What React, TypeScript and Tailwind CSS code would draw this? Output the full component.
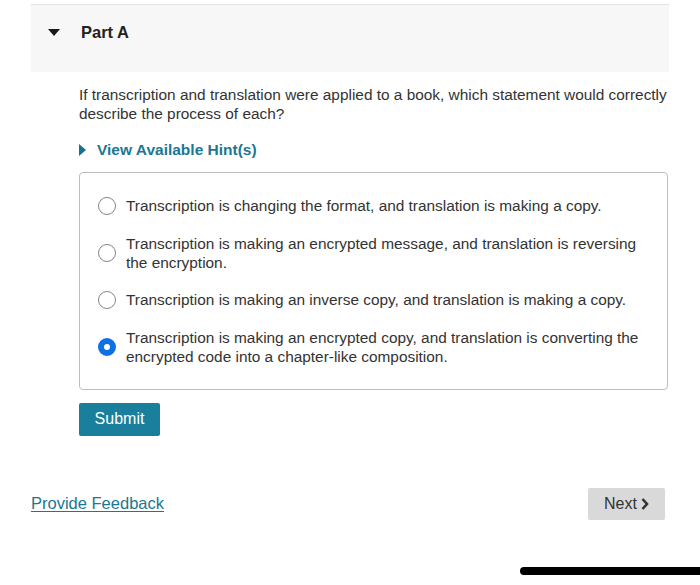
const options = [
  { text: "Transcription is changing the format, and translation is making a copy.", checked: false },
  {
    text: "Transcription is making an encrypted message, and translation is reversing the encryption.",
    checked: false,
  },
  { text: "Transcription is making an inverse copy, and translation is making a copy.", checked: false },
  {
    text: "Transcription is making an encrypted copy, and translation is converting the encrypted code into a chapter-like composition.",
    checked: true,
  },
];

function Radio({ checked }: { checked: boolean }) {
  if (checked) {
    return <span className="block h-[18px] w-[18px] shrink-0 rounded-full border-[6px] border-[#0f6fe6] bg-white" />;
  }
  return <span className="block h-[18px] w-[18px] shrink-0 rounded-full border-[1.5px] border-[#858585] bg-white" />;
}

export default function App() {
  return (
    <div className="relative h-[585px] w-[700px] overflow-hidden bg-white font-['Liberation_Sans',Arial,sans-serif] text-[#333]">
      {/* part header */}
      <div className="ml-[31px] mt-[4px] flex h-[68px] w-[638px] items-start border-t border-[#e4e4e4] bg-[#f7f7f7] pt-[17px]">
        <svg width="12" height="8" viewBox="0 0 12 8" className="ml-[17px] mt-[7px]">
          <path d="M0 0 H12 L6 7 Z" fill="#1a1a1a" />
        </svg>
        <span className="ml-[21px] text-[16.5px] font-bold leading-[20px] text-[#222]">Part A</span>
      </div>

      <div className="pl-[79px] pr-[31px]">
        <p className="mt-[13px] text-[15.4px] leading-[19px]">
          If transcription and translation were applied to a book, which statement would correctly describe the process
          of each?
        </p>

        <div className="mt-[17px] flex items-center leading-[19px]">
          <svg width="8" height="12" viewBox="0 0 8 12">
            <path d="M0 0 L7 6 L0 12 Z" fill="#1b6f8a" />
          </svg>
          <span className="ml-[10px] text-[15.5px] font-bold text-[#1b7792]">View Available Hint(s)</span>
        </div>

        <div className="mt-[13px] flex w-[589px] flex-col gap-[18.5px] rounded-[4px] border border-[#bdbdbd] pb-[23px] pl-[18px] pr-[20px] pt-[23px]">
          {options.map((o) => (
            <div key={o.text} className="flex items-center gap-[10px]">
              <Radio checked={o.checked} />
              <span className="text-[15.4px] leading-[19px]">{o.text}</span>
            </div>
          ))}
        </div>

        <button className="mt-[13px] h-[33px] w-[81px] rounded-[2px] bg-[#1a7f9c] text-[16px] text-white">Submit</button>
      </div>

      <div className="mt-[52px] flex items-center justify-between pl-[31px] pr-[35px]">
        <a className="text-[16.5px] text-[#1b7792] underline underline-offset-2">Provide Feedback</a>
        <button className="flex h-[32px] w-[77px] items-center justify-center gap-[4px] rounded-[2px] bg-[#d9d9d9] text-[16px] text-[#333]">
          Next
          <svg width="8" height="12" viewBox="0 0 8 12">
            <path d="M1.5 1 L6 6 L1.5 11" fill="none" stroke="#333" strokeWidth="2.6" />
          </svg>
        </button>
      </div>

      {/* home indicator */}
      <div className="absolute left-[520px] top-[567px] h-[8px] w-[200px] rounded-full bg-black" />
    </div>
  );
}
